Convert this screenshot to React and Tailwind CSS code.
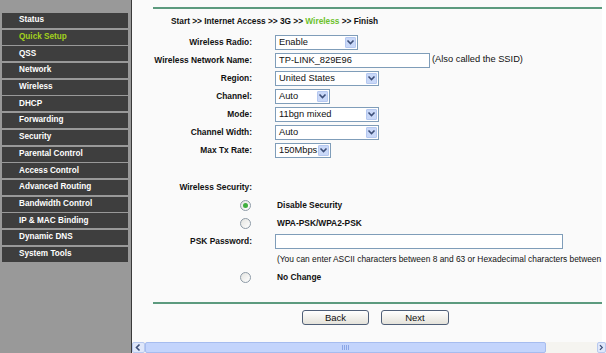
import React from "react";

const menuItems = [
  "Status",
  "Quick Setup",
  "QSS",
  "Network",
  "Wireless",
  "DHCP",
  "Forwarding",
  "Security",
  "Parental Control",
  "Access Control",
  "Advanced Routing",
  "Bandwidth Control",
  "IP & MAC Binding",
  "Dynamic DNS",
  "System Tools",
];

const Chevron = ({ dir = "down" }) => {
  const d = {
    down: "M1.5 2.5 L4.5 5.5 L7.5 2.5",
    left: "M5.5 1.5 L2.5 4.5 L5.5 7.5",
    right: "M2.5 1.5 L5.5 4.5 L2.5 7.5",
  }[dir];
  return (
    <svg width="9" height="9" viewBox="0 0 9 9">
      <path d={d} fill="none" stroke="#3d4f78" strokeWidth="1.6" />
    </svg>
  );
};

const Select = ({ value, className }) => (
  <div className={"flex h-[15px] items-stretch border border-[#7f9db9] bg-white " + className}>
    <span className="flex-1 pl-[3px] text-[9.3px] leading-[13px] text-[#111]">{value}</span>
    <span className="m-[1px] flex w-[11px] items-center justify-center rounded-[1px] border border-[#b5c8f0] bg-[#c9d8f8]">
      <Chevron />
    </span>
  </div>
);

const Radio = ({ checked }) => (
  <span className="flex h-[11px] w-[11px] items-center justify-center rounded-full border border-[#8d9aa6] bg-gradient-to-br from-[#e4e4e0] to-white">
    {checked && <span className="h-[5px] w-[5px] rounded-full bg-[#3fae3f]" />}
  </span>
);

const Row = ({ label, children }) => (
  <div className="flex h-[18px] items-center">
    <div className="w-[99px] text-right text-[8.4px] font-bold text-[#111]">{label}</div>
    <div className="ml-[23px] flex items-center">{children}</div>
  </div>
);

const RadioRow = ({ checked, label }) => (
  <div className="flex h-[18px] items-center">
    <div className="flex w-[99px] justify-end pr-[1px]">
      <Radio checked={checked} />
    </div>
    <div className="ml-[25px] text-[8.4px] font-bold text-[#111]">{label}</div>
  </div>
);

const Button = ({ children, className }) => (
  <button className={"h-[15px] rounded-[3px] border border-[#4f5f78] bg-gradient-to-b from-white to-[#e4e2da] text-[9.5px] leading-[13px] text-[#111] " + className}>
    {children}
  </button>
);

export default function App() {
  return (
    <div className="flex h-[353px] w-[606px] overflow-hidden bg-white font-['Liberation_Sans',Arial,sans-serif]">
      {/* left menu frame */}
      <div className="w-[131px] shrink-0 bg-[#999999] pt-[13px]">
        {menuItems.map((item) => (
          <div
            key={item}
            className="mb-[1.7px] ml-[2px] flex h-[15px] w-[126px] items-center bg-[#3e3e3e] pl-[17px]"
          >
            <span className={"text-[8.2px] font-bold " + (item === "Quick Setup" ? "text-[#a2d11c]" : "text-white")}>
              {item}
            </span>
          </div>
        ))}
      </div>
      <div className="w-[1px] shrink-0 bg-[#3a3a3a]" />

      {/* main frame */}
      <div className="flex min-w-0 flex-1 flex-col">
        <div className="flex min-h-0 flex-1">
          <div className="min-w-0 flex-1 overflow-hidden bg-[#fafafa] pl-[21px] pt-[7px]">
            <div className="h-[2px] bg-[#5c9a7e]" />
            <div className="ml-[18px] mt-[6px] h-[12px] whitespace-nowrap text-[8.3px] font-bold leading-[12px] text-[#111]">
              Start &gt;&gt; Internet Access &gt;&gt; 3G &gt;&gt; <span className="text-[#6cc12a]">Wireless</span> &gt;&gt; Finish
            </div>

            <div className="mt-[6px]">
              <Row label="Wireless Radio:">
                <Select value="Enable" className="w-[83px]" />
              </Row>
              <Row label="Wireless Network Name:">
                <div className="h-[15px] w-[155px] border border-[#7f9db9] bg-white pl-[3px] text-[9.3px] leading-[13px] text-[#111]">
                  TP-LINK_829E96
                </div>
                <span className="ml-[2px] whitespace-nowrap text-[9.3px] text-[#111]">(Also called the SSID)</span>
              </Row>
              <Row label="Region:">
                <Select value="United States" className="w-[104px]" />
              </Row>
              <Row label="Channel:">
                <Select value="Auto" className="w-[55px]" />
              </Row>
              <Row label="Mode:">
                <Select value="11bgn mixed" className="w-[104px]" />
              </Row>
              <Row label="Channel Width:">
                <Select value="Auto" className="w-[104px]" />
              </Row>
              <Row label="Max Tx Rate:">
                <Select value="150Mbps" className="w-[56px]" />
              </Row>
            </div>

            <div className="mt-[19px]">
              <Row label="Wireless Security:" />
              <RadioRow checked label="Disable Security" />
              <RadioRow label="WPA-PSK/WPA2-PSK" />
              <Row label="PSK Password:">
                <div className="h-[15px] w-[288px] border border-[#7f9db9] bg-white" />
              </Row>
              <div className="flex h-[18px] items-center whitespace-nowrap pl-[124px] text-[8.4px] text-[#111]">
                (You can enter ASCII characters between 8 and 63 or Hexadecimal characters between
              </div>
              <RadioRow label="No Change" />
            </div>

            <div className="mt-[16px] h-[2px] bg-[#5c9a7e]" />
            <div className="mt-[6px] flex pl-[149px]">
              <Button className="w-[67px]">Back</Button>
              <Button className="ml-[12px] w-[68px]">Next</Button>
            </div>
          </div>
          <div className="w-[4px] shrink-0 bg-white" />
        </div>

        {/* horizontal scrollbar */}
        <div className="flex h-[11px] shrink-0 bg-[#f5f4f0]">
          <div className="flex w-[13px] items-center justify-center rounded-[2px] border border-[#b8c9ef] bg-[#dfe7fa]">
            <Chevron dir="left" />
          </div>
          <div className="flex w-[401px] items-center justify-center rounded-[2px] border border-[#a6bcef] bg-[#c3d4fc]">
            <div className="flex h-[5px] gap-[1px]">
              <span className="w-[1px] bg-[#8aa6e6]" />
              <span className="w-[1px] bg-[#8aa6e6]" />
              <span className="w-[1px] bg-[#8aa6e6]" />
              <span className="w-[1px] bg-[#8aa6e6]" />
            </div>
          </div>
          <div className="flex-1" />
          <div className="flex w-[9px] items-center justify-center rounded-[2px] border border-[#b8c9ef] bg-[#dfe7fa]">
            <Chevron dir="right" />
          </div>
        </div>
      </div>
    </div>
  );
}
